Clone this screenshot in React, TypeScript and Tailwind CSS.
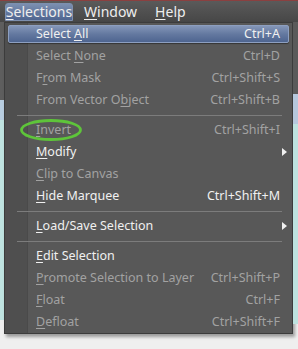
const font = { fontFamily: '"Noto Sans", "Open Sans", sans-serif' };

type Item =
  | { kind: "sep" }
  | {
      kind: "item";
      pre: string;
      key: string;
      post: string;
      shortcut?: string;
      disabled?: boolean;
      submenu?: boolean;
      active?: boolean;
      circled?: boolean;
    };

const items: Item[] = [
  { kind: "item", pre: "Select ", key: "A", post: "ll", shortcut: "Ctrl+A", active: true },
  { kind: "item", pre: "Select ", key: "N", post: "one", shortcut: "Ctrl+D", disabled: true },
  { kind: "item", pre: "F", key: "r", post: "om Mask", shortcut: "Ctrl+Shift+S", disabled: true },
  { kind: "item", pre: "From Vector O", key: "b", post: "ject", shortcut: "Ctrl+Shift+B", disabled: true },
  { kind: "sep" },
  { kind: "item", pre: "", key: "I", post: "nvert", shortcut: "Ctrl+Shift+I", disabled: true, circled: true },
  { kind: "item", pre: "", key: "M", post: "odify", submenu: true },
  { kind: "item", pre: "", key: "C", post: "lip to Canvas", disabled: true },
  { kind: "item", pre: "", key: "H", post: "ide Marquee", shortcut: "Ctrl+Shift+M" },
  { kind: "sep" },
  { kind: "item", pre: "", key: "L", post: "oad/Save Selection", submenu: true },
  { kind: "sep" },
  { kind: "item", pre: "", key: "E", post: "dit Selection" },
  { kind: "item", pre: "", key: "P", post: "romote Selection to Layer", shortcut: "Ctrl+Shift+P", disabled: true },
  { kind: "item", pre: "", key: "F", post: "loat", shortcut: "Ctrl+F", disabled: true },
  { kind: "item", pre: "", key: "D", post: "efloat", shortcut: "Ctrl+Shift+F", disabled: true },
];

function MenuRow({ it }: { it: Extract<Item, { kind: "item" }> }) {
  const color = it.disabled ? "text-[#a2a2a2]" : "text-[#f0f0f0]";
  return (
    <div className="relative h-[22px] px-[3px] py-[2px]">
      <div
        className={
          "flex h-full items-center rounded-[2px] " +
          (it.active
            ? "border border-[#8d9fc0] bg-gradient-to-b from-[#8496b8] via-[#6479a0] to-[#4e6590] shadow-[0_1px_1px_rgba(0,0,0,0.4)]"
            : "border border-transparent")
        }
      >
        <span className={"ml-[27px] text-[12.5px] leading-none " + color}>
          {it.pre}
          <span className="underline underline-offset-2">{it.key}</span>
          {it.post}
        </span>
        <span className={"ml-auto mr-[8px] text-[12.5px] leading-none " + color}>{it.shortcut}</span>
        {it.submenu && (
          <svg width="5" height="8" viewBox="0 0 5 8" className="absolute right-[5px] top-[7px]">
            <path d="M0 0 L5 4 L0 8 Z" fill="#f0f0f0" />
          </svg>
        )}
      </div>
      {it.circled && (
        <svg
          width="62"
          height="22"
          viewBox="0 0 62 22"
          className="absolute left-[15px] top-0"
        >
          <ellipse cx="31" cy="11" rx="29.5" ry="9.5" fill="none" stroke="#5ec43a" strokeWidth="2.8" />
        </svg>
      )}
    </div>
  );
}

export default function App() {
  return (
    <div className="flex h-[349px] w-[298px] flex-col overflow-hidden bg-[#efefef]" style={font}>
      {/* menubar */}
      <div className="flex h-[22px] items-center border-t border-[#8a4040] bg-gradient-to-b from-[#5a5a5a] to-[#474747] text-[14px] text-[#eeeeee]">
        <div className="ml-[5px] flex h-[18px] w-[68px] items-center justify-center rounded-t-[3px] border border-[#7d8fae] bg-gradient-to-b from-[#7c8fb0] to-[#4f6590]">
          <span>
            <span className="underline underline-offset-2">S</span>elections
          </span>
        </div>
        <span className="ml-[11px]">
          <span className="underline underline-offset-2">W</span>indow
        </span>
        <span className="ml-[18px]">
          <span className="underline underline-offset-2">H</span>elp
        </span>
      </div>

      <div className="flex">
        {/* window behind, left */}
        <div className="flex w-[4px] flex-col">
          <div className="h-[78px] bg-[#5e5e5e]" />
          <div className="h-[20px] bg-[#b8cde0]" />
          <div className="h-[200px] bg-[#bfe3e0]" />
        </div>

        {/* dropdown menu */}
        <div className="w-[289px] border border-[#3c3c3c] bg-[#585858] shadow-[2px_3px_3px_rgba(0,0,0,0.35)]">
          <div className="relative">
            <div className="absolute bottom-0 left-[22px] top-0 w-px bg-[#4a4a4a]" />
            <div className="absolute bottom-0 left-0 top-0 w-[22px] bg-[#4f4f4f]" />
            <div className="relative flex flex-col">
              {items.map((it, i) =>
                it.kind === "sep" ? (
                  <div key={i} className="flex h-[8px] items-center pl-[12px] pr-[10px]">
                    <div className="h-px w-full bg-[#7c7c7c]" />
                  </div>
                ) : (
                  <MenuRow key={i} it={it} />
                ),
              )}
            </div>
          </div>
        </div>

        {/* window behind, right */}
        <div className="flex w-[5px] flex-col">
          <div className="h-[72px] bg-[#5a5a5a]" />
          <div className="h-[30px] bg-[#b6c8dd]" />
          <div className="h-[200px] bg-[#bde2df]" />
        </div>
      </div>
    </div>
  );
}
